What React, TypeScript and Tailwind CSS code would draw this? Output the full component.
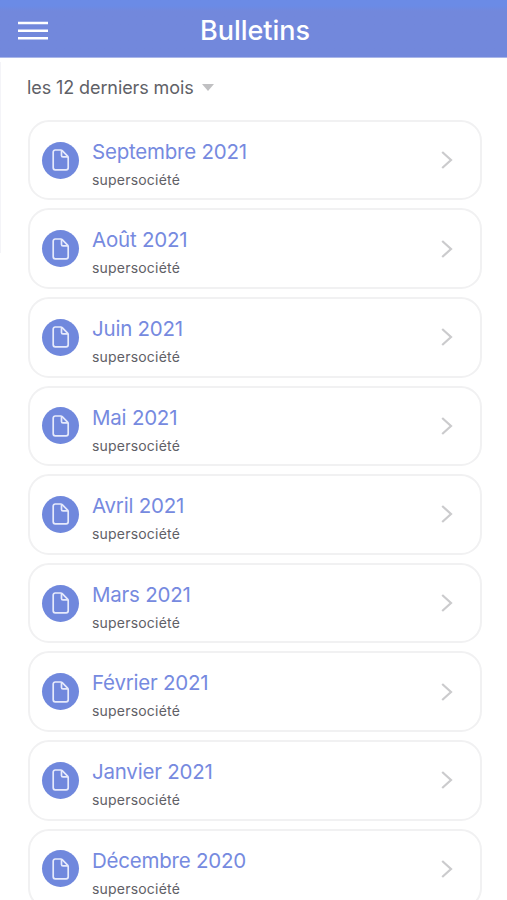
type Bulletin = {
  month: string;
  company: string;
};

const bulletins: Bulletin[] = [
  { month: "Septembre 2021", company: "supersociété" },
  { month: "Août 2021", company: "supersociété" },
  { month: "Juin 2021", company: "supersociété" },
  { month: "Mai 2021", company: "supersociété" },
  { month: "Avril 2021", company: "supersociété" },
  { month: "Mars 2021", company: "supersociété" },
  { month: "Février 2021", company: "supersociété" },
  { month: "Janvier 2021", company: "supersociété" },
  { month: "Décembre 2020", company: "supersociété" },
];

function MenuIcon() {
  return (
    <svg width="32" height="20" viewBox="0 0 32 20" fill="none" stroke="white" strokeWidth="2.6">
      <path d="M1 2h30M1 9.7h30M1 17.3h30" strokeLinecap="butt" />
    </svg>
  );
}

function DocumentIcon() {
  return (
    <svg
      width="18"
      height="22"
      viewBox="0 0 18 22"
      fill="none"
      stroke="#e6eafb"
      strokeWidth="1.7"
      strokeLinejoin="round"
    >
      <path d="M3.2 1h5.6c.6 0 1 .2 1.4.6l5.4 5.5c.4.4.6.8.6 1.4v10.3a2 2 0 0 1-2 2h-11a2 2 0 0 1-2-2V3a2 2 0 0 1 2-2Z" />
      <path d="M9.5 1.2v5.2c0 .9.6 1.5 1.5 1.5h5.1" />
    </svg>
  );
}

function BulletinCard({ month, company }: Bulletin) {
  return (
    <button
      type="button"
      className="flex h-[80.6px] w-full shrink-0 items-center rounded-[21px] border-2 border-[#f1f1f2] bg-white pr-[27px] pl-[12px] text-left"
    >
      <span className="flex size-[37px] shrink-0 items-center justify-center rounded-full bg-[#7088dd]">
        <DocumentIcon />
      </span>
      <span className="ml-[13px] flex flex-1 flex-col pt-[8.4px]">
        <span className="text-[20.5px] leading-[28px] tracking-[-0.22px] text-[#768adf]">{month}</span>
        <span className="mt-[3px] text-[14px] leading-[22px] tracking-[0.2px] text-[#5f6066]">{company}</span>
      </span>
      <svg width="12" height="18" viewBox="0 0 12 18" fill="none" stroke="#cbcbcd" strokeWidth="2.2">
        <path d="m1.2 1 8.8 8-8.8 8" />
      </svg>
    </button>
  );
}

export default function App() {
  return (
    <div className="flex h-[900px] w-[507px] flex-col overflow-hidden bg-white font-['Inter','Liberation_Sans',sans-serif]">
      <header className="grid h-[58px] shrink-0 grid-cols-[1fr_auto_1fr] items-center border-b border-[#aab7e9] bg-linear-to-b from-[#6b8be6] from-[6px] to-[#7288dc] to-[11px] px-[17px]">
        <button type="button" aria-label="Menu" className="mt-[4px] justify-self-start">
          <MenuIcon />
        </button>
        <h1 className="mt-[4px] ml-[3px] text-[27px] leading-[34px] font-[450] tracking-[-0.05px] text-white">
          Bulletins
        </h1>
      </header>
      <main className="relative flex min-h-0 flex-1 flex-col pr-[25px] pl-[28px]">
        <div className="absolute top-1 left-0 h-[191px] w-px bg-[#f4f4f8]" />
        <button
          type="button"
          className="-ml-px flex h-[61.8px] shrink-0 items-center gap-2 pb-[3px] text-[18px] tracking-[-0.1px] text-[#606167]"
        >
          les 12 derniers mois
          <svg width="12" height="7" viewBox="0 0 12 7" fill="#c0c0c2">
            <path d="M0 0h12L6 7Z" />
          </svg>
        </button>
        <div className="flex flex-col gap-2">
          {bulletins.map((bulletin) => (
            <BulletinCard key={bulletin.month} {...bulletin} />
          ))}
        </div>
      </main>
    </div>
  );
}
